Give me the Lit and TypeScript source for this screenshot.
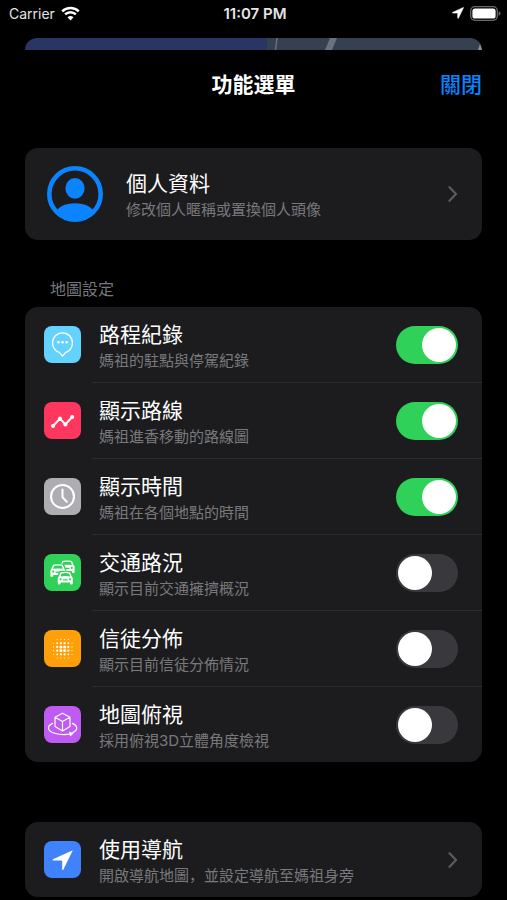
import { LitElement, html, svg, css, nothing } from "lit";
import { customElement, state } from "lit/decorators.js";

type Setting = {
  id: string;
  title: string;
  note: string;
  on: boolean;
};

const car = (x: number, y: number, cut: boolean) => svg`
  <g transform="translate(${x} ${y})">
    ${cut ? svg`<path d="M-1 5.4L1.6 -1H13.4L16 5.4V14H-1Z" fill="#30d158"/>` : nothing}
    <path fill="#fff" fill-rule="evenodd" d="M3.4 0.2Q7.5 -0.6 11.6 0.2Q12.2 0.4 12.6 1.2L14 4.4Q15 5.2 15 6.4V11.6Q15 12.4 14.2 12.4H13Q12.2 12.4 12.2 11.6V10.6H2.8V11.6Q2.8 12.4 2 12.4H0.8Q0 12.4 0 11.6V6.4Q0 5.2 1 4.4L2.4 1.2Q2.8 0.4 3.4 0.2ZM3.8 1.4L2.6 4.4Q7.5 3.8 12.4 4.4L11.2 1.4Q7.5 0.8 3.8 1.4ZM1.7 7.3a1.1 1.1 0 1 0 2.2 0a1.1 1.1 0 1 0 -2.2 0ZM11.1 7.3a1.1 1.1 0 1 0 2.2 0a1.1 1.1 0 1 0 -2.2 0ZM5.2 7.2V8.4H9.8V7.2Z"/>
  </g>`;

const dots = () => {
  const out = [];
  const size = [
    [0, 0.5, 0.6, 0.6, 0.5, 0],
    [0.5, 0.9, 1.1, 1.1, 0.9, 0.5],
    [0.6, 1.1, 1.5, 1.5, 1.1, 0.6],
    [0.6, 1.1, 1.5, 1.5, 1.1, 0.6],
    [0.5, 0.9, 1.1, 1.1, 0.9, 0.5],
    [0, 0.5, 0.6, 0.6, 0.5, 0],
  ];
  for (let r = 0; r < 6; r++)
    for (let c = 0; c < 6; c++)
      if (size[r][c])
        out.push(svg`<circle cx=${9.5 + c * 3.7} cy=${9.5 + r * 3.7} r=${size[r][c]} fill="#fff"/>`);
  return out;
};

const arrow = "M28.2 9.4L9 18.2Q8 18.8 9 19.4H17.4Q18.2 19.4 18.2 20.2V28.4Q18.7 29.6 19.4 28.6L28.6 9.8Q28.8 9.2 28.2 9.4Z";

const glyphs: Record<string, unknown> = {
  track: svg`
    <path d="M18.5 6.8a10 10 0 0 1 10 10c0 5-3.2 8.6-6.8 9.6L18.5 30.2L15.300 26.4C11.7 25.4 8.5 21.8 8.5 16.8a10 10 0 0 1 10-10Z" fill="none" stroke="#fff" stroke-width="1.3" stroke-linejoin="round"/>
    <circle cx="14.4" cy="16.2" r="1.3" fill="#fff"/><circle cx="18.5" cy="16.2" r="1.3" fill="#fff"/><circle cx="22.6" cy="16.2" r="1.3" fill="#fff"/>`,
  route: svg`
    <path d="M9 24L16 16.6L21.4 22.4L28 15.2" fill="none" stroke="#fff" stroke-width="2.1" stroke-linecap="round" stroke-linejoin="round"/>
    <circle cx="9" cy="24" r="2" fill="#fff"/><circle cx="16" cy="16.6" r="2" fill="#fff"/><circle cx="21.4" cy="22.4" r="2" fill="#fff"/><circle cx="28.2" cy="15" r="2" fill="#fff"/>`,
  time: svg`
    <circle cx="18.5" cy="18.5" r="11.5" fill="none" stroke="#fff" stroke-width="2.1"/>
    <path d="M18.5 11.5V19.2L22.8 23.8" fill="none" stroke="#fff" stroke-width="2" stroke-linecap="round" stroke-linejoin="round"/>`,
  traffic: svg`${car(15.6, 6.6, false)}${car(6.4, 10.4, true)}${car(13.8, 18, true)}`,
  spread: dots(),
  tilt: svg`
    <g fill="none" stroke="#fff" stroke-width="1.2" stroke-linejoin="round" stroke-linecap="round">
      <path d="M18.5 7.2L26 11.2V20.6L18.5 25L11 20.6V11.2ZM11 11.2L18.5 15.6L26 11.2M18.5 15.6V25"/>
      <path d="M8.6 17.4C2.4 20.2 3.6 25 9.8 27C15 28.8 21 29 26 28.2M28.4 17.4C34.2 20 34 24.2 28.8 26.6"/>
    </g>
    <path d="M25.2 25.4L29.6 27.6L26 30.6Z" fill="#fff"/>`,
  navigate: svg`<path d=${arrow} fill="#fff"/>`,
};

@customElement("app-root")
export class AppRoot extends LitElement {
  @state() private settings: Setting[] = [
    { id: "track", title: "路程紀錄", note: "媽祖的駐點與停駕紀錄", on: true },
    { id: "route", title: "顯示路線", note: "媽祖進香移動的路線圖", on: true },
    { id: "time", title: "顯示時間", note: "媽祖在各個地點的時間", on: true },
    { id: "traffic", title: "交通路況", note: "顯示目前交通擁擠概況", on: false },
    { id: "spread", title: "信徒分佈", note: "顯示目前信徒分佈情況", on: false },
    { id: "tilt", title: "地圖俯視", note: "採用俯視3D立體角度檢視", on: false },
  ];

  static styles = css`
    :host {
      display: block;
      min-height: 100vh;
      box-sizing: border-box;
      padding-bottom: 3px;
      background: #000;
      color: #fff;
      font-family: Inter, "Noto Sans CJK SC", sans-serif;
    }
    svg { display: block; flex: none; }
    button {
      border: 0;
      margin: 0;
      padding: 0;
      background: none;
      color: inherit;
      font: inherit;
      text-align: start;
    }
    h1, h2, p { margin: 0; }
    .status {
      display: grid;
      grid-template-columns: 1fr auto 1fr;
      align-items: center;
      height: 26px;
      padding: 0 6px 0 9px;
      font-size: 14px;
      color: #e4e4e4;
    }
    .side { display: flex; align-items: center; gap: 6px; }
    .end { justify-content: flex-end; }
    .clock { font-size: 15px; font-weight: 600; }
    .map {
      height: 12px;
      margin: 12px 25px 0;
      border-radius: 12px 12px 0 0;
      overflow: hidden;
      background: linear-gradient(90deg, #2a3563 53%, #364150 53%);
    }
    .map svg { width: 100%; height: 100%; }
    .bar {
      display: grid;
      grid-template-columns: 1fr auto 1fr;
      align-items: center;
      height: 70px;
      padding: 0 25px;
    }
    .bar h1 { grid-column: 2; font-size: 21px; line-height: 28px; font-weight: 700; }
    .close {
      justify-self: end;
      color: #0a84ff;
      font-size: 21px;
      line-height: 28px;
      font-weight: 500;
    }
    main { display: flex; flex-direction: column; padding: 28px 25px 0; }
    .card {
      display: block;
      width: 100%;
      border-radius: 13px;
      background: #1c1c1e;
      overflow: hidden;
    }
    .profile {
      display: flex;
      align-items: center;
      gap: 23px;
      height: 92px;
      padding: 0 24px 0 22px;
    }
    .heading {
      margin: 38px 25px 6px;
      color: #77777c;
      font-size: 16px;
      line-height: 23px;
      font-weight: 400;
    }
    .row {
      display: flex;
      align-items: center;
      gap: 18px;
      height: 75px;
      padding: 0 24px 0 19px;
    }
    .line { height: 1px; margin-left: 67px; background: #2d2d30; }
    .text {
      flex: 1;
      min-width: 0;
      display: flex;
      flex-direction: column;
      padding-top: 4px;
    }
    .title { font-size: 21px; line-height: 28px; }
    .note { font-size: 15px; line-height: 24px; color: #79797d; }
    .tile { border-radius: 8px; width: 37px; height: 37px; flex: none; }
    .track { background: #64d2ff; }
    .route { background: #ff375f; }
    .time { background: #aeaeb2; }
    .traffic { background: #30d158; }
    .spread { background: #ff9f0a; }
    .tilt { background: #bf5af2; }
    .navigate { background: #3f82fb; }
    .switch {
      appearance: none;
      flex: none;
      width: 62px;
      height: 38px;
      margin: 0;
      padding: 2px;
      box-sizing: border-box;
      border-radius: 19px;
      background: #39393d;
    }
    .switch::before {
      content: "";
      display: block;
      width: 34px;
      height: 34px;
      border-radius: 50%;
      background: #fff;
    }
    .switch:checked { background: #30d158; }
    .switch:checked::before { margin-left: auto; }
    .gap { display: flex; margin-top: 60px; }
  `;

  private flip(id: string) {
    this.settings = this.settings.map((s) => (s.id === id ? { ...s, on: !s.on } : s));
  }

  private tile(id: string) {
    return html`<span class="tile ${id}"><svg width="37" height="37" viewBox="0 0 37 37" aria-hidden="true">${glyphs[id]}</svg></span>`;
  }

  private chevron() {
    return html`<svg width="10" height="18" viewBox="0 0 10 18" aria-hidden="true">
      <path d="M1.5 2.2L8 9L1.5 15.8" fill="none" stroke="#5c5c60" stroke-width="2.2" stroke-linecap="round" stroke-linejoin="round"/>
    </svg>`;
  }

  render() {
    return html`
      <div class="status">
        <div class="side">
          <span>Carrier</span>
          <svg width="19" height="15" viewBox="0 0 19 15" aria-hidden="true">
            <g fill="none" stroke="#fff" stroke-width="2.5">
              <path d="M1.2 5.3A12 12 0 0 1 17.8 5.3"/>
              <path d="M4.1 8.4A7.8 7.8 0 0 1 14.9 8.4"/>
            </g>
            <path d="M9.5 14.5L6.5 11.3A4.4 4.4 0 0 1 12.5 11.3Z" fill="#fff"/>
          </svg>
        </div>
        <span class="clock">11:07 PM</span>
        <div class="side end">
          <svg width="12" height="12" viewBox="8 8.5 21.5 21.5" aria-hidden="true"><path d=${arrow} fill="#fff" stroke="#fff"/></svg>
          <svg width="31" height="15" viewBox="0 0 31 15" aria-hidden="true">
            <rect x="0.7" y="0.7" width="26.6" height="13.6" rx="4.2" fill="none" stroke="#6a6a6a" stroke-width="1.3"/>
            <rect x="2.4" y="2.4" width="23.2" height="10.2" rx="2.6" fill="#fff"/>
            <path d="M28.6 5.2Q30.6 6 30.6 7.5T28.6 9.8Z" fill="#6a6a6a"/>
          </svg>
        </div>
      </div>
      <div class="map">
        <svg viewBox="0 0 457 12" preserveAspectRatio="none" aria-hidden="true">
          <path d="M252 0L250.5 12" stroke="#66707f" stroke-width="1.5"/>
          <path d="M305 0H312L307 12H300Z" fill="#69727f"/>
          <path d="M455 6L457 12H453Z" fill="#8a9099"/>
        </svg>
      </div>
      <header class="bar">
        <h1>功能選單</h1>
        <button class="close" type="button">關閉</button>
      </header>
      <main>
        <button class="card profile" type="button">
          <svg width="56" height="56" viewBox="0 0 56 56" aria-hidden="true">
            <circle cx="28" cy="28" r="25.7" fill="none" stroke="#0a84ff" stroke-width="4.6"/>
            <ellipse cx="28" cy="22.4" rx="9.6" ry="10.4" fill="#0a84ff"/>
            <path d="M9.500 44.2Q15.5 37.2 28 37.2T46.5 44.2Q39 54.5 28 54.5T9.5 44.2Z" fill="#0a84ff"/>
          </svg>
          <span class="text">
            <span class="title">個人資料</span>
            <span class="note">修改個人暱稱或置換個人頭像</span>
          </span>
          ${this.chevron()}
        </button>
        <h2 class="heading">地圖設定</h2>
        <div class="card">
          ${this.settings.map(
            (s, i) => html`
              ${i ? html`<div class="line"></div>` : nothing}
              <div class="row">
                ${this.tile(s.id)}
                <label class="text" for=${s.id}>
                  <span class="title">${s.title}</span>
                  <span class="note">${s.note}</span>
                </label>
                <input class="switch" type="checkbox" role="switch" id=${s.id} .checked=${s.on} @change=${() => this.flip(s.id)} />
              </div>
            `
          )}
        </div>
        <button class="card row gap" type="button">
          ${this.tile("navigate")}
          <span class="text">
            <span class="title">使用導航</span>
            <span class="note">開啟導航地圖，並設定導航至媽祖身旁</span>
          </span>
          ${this.chevron()}
        </button>
      </main>
    `;
  }
}
